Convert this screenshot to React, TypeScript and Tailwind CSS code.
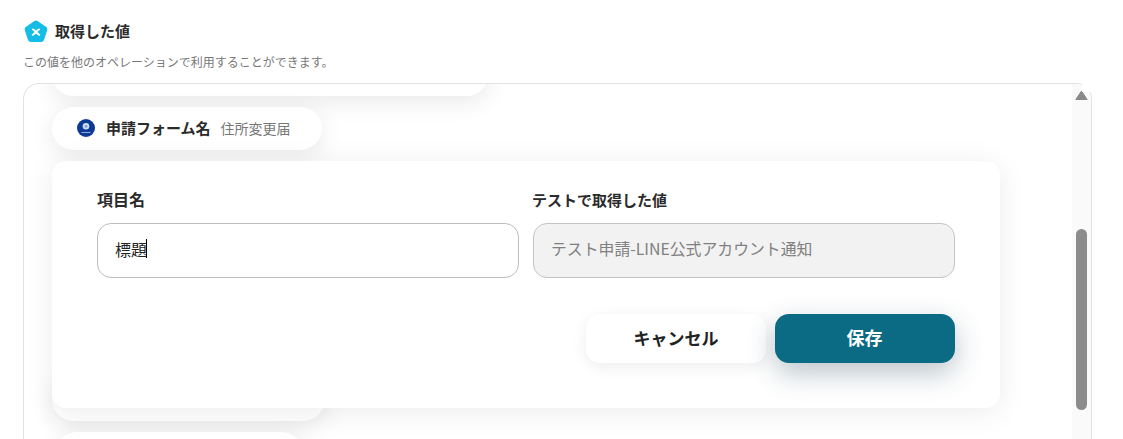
import React from 'react';

const pillShadow = 'shadow-[0_6px_24px_rgba(0,0,0,0.09)]';

const PentagonIcon = () => (
  <svg width="24" height="24" viewBox="0 0 24 24" className="shrink-0">
    <path
      d="M10 1.2a3.2 3.2 0 0 1 3.9 0l8 5.6a3.2 3.2 0 0 1 1.2 3.6l-3 9.4a3.2 3.2 0 0 1-3 2.2H6.9a3.2 3.2 0 0 1-3-2.2l-3-9.4a3.2 3.2 0 0 1 1.2-3.6z"
      fill="#13bde6"
    />
    <path
      d="M8.8 9.4c2 .4 4.4 4.8 6.6 5.4M15.2 9.4c-2 .4-4.4 4.8-6.6 5.4"
      fill="none"
      stroke="#fff"
      strokeWidth="1.9"
      strokeLinecap="round"
    />
  </svg>
);

const FormIcon = () => (
  <svg width="18" height="18" viewBox="0 0 18 18" className="shrink-0">
    <circle cx="9" cy="9" r="9" fill="#0d3a94" />
    <circle cx="9" cy="7.2" r="3.3" fill="#cfe0f2" />
    <circle cx="9" cy="7.2" r="1.5" fill="#7fa6d8" />
    <rect x="4.5" y="13" width="9" height="1" fill="#8fa9d8" />
  </svg>
);

const App: React.FC = () => {
  return (
    <div className="h-[439px] w-[1123px] overflow-hidden bg-white font-['Noto_Sans_CJK_JP','Noto_Sans',sans-serif] text-[#2b2b2b]">
      <div className="pl-[23px] pt-[20px]">
        {/* Heading */}
        <div className="flex h-[24px] items-center gap-[7px] pl-[1px]">
          <PentagonIcon />
          <h2 className="-mt-[2px] text-[15px] font-bold leading-[24px]">取得した値</h2>
        </div>
        <p className="mt-[8px] text-[12px] leading-[20px] text-[#777]">
          この値を他のオペレーションで利用することができます。
        </p>

        {/* Output list */}
        <div className="relative mt-[11px] w-[1069px]">
          <div className="flex h-[400px] overflow-hidden rounded-t-[16px] border-l border-r border-t border-[#e2e2e2]">
            <div className="flex min-w-0 flex-1 flex-col items-start pl-[28px]">
              <div className={`-mt-[30px] h-[42px] w-[436px] shrink-0 rounded-[24px] bg-white ${pillShadow}`} />

              <div className={`mt-[11px] flex h-[43px] w-[270px] shrink-0 items-center rounded-[24px] bg-white pb-[2px] pl-[25px] ${pillShadow}`}>
                <FormIcon />
                <span className="ml-[11px] text-[15px] font-bold leading-none">申請フォーム名</span>
                <span className="ml-[10px] text-[14px] leading-none text-[#777]">住所変更届</span>
              </div>

              {/* Edit panel */}
              <div className="relative z-10 mt-[11px] h-[247px] w-[948px] shrink-0 rounded-[14px] bg-white px-[45px] pt-[27px] shadow-[0_4px_30px_rgba(0,0,0,0.08)]">
                <div className="grid grid-cols-[422px_422px] gap-x-[14px]">
                  <div>
                    <label className="block text-[16px] font-bold leading-[22px]">項目名</label>
                    <div className="mt-[13px] flex h-[55px] items-center rounded-[14px] border border-[#bdbdbd] bg-white pb-[4px] pl-[17px] text-[16px] text-[#222]">
                      標題<span className="ml-[-1px] h-[19px] w-px bg-black" />
                    </div>
                  </div>
                  <div>
                    <label className="-ml-px mt-px block text-[15px] font-bold leading-[22px]">テストで取得した値</label>
                    <div className="mt-[12px] flex h-[55px] items-center rounded-[14px] border border-[#c4c4c4] bg-[#f2f2f2] pb-[4px] pl-[17px] text-[15.85px] text-[#808080]">
                      テスト申請-LINE公式アカウント通知
                    </div>
                  </div>
                </div>
                <div className="mt-[36px] flex justify-end gap-[9px]">
                  <button className="h-[49px] w-[180px] rounded-[14px] bg-white pb-[2px] text-[17px] font-bold text-[#222] shadow-[0_4px_16px_rgba(0,0,0,0.07)]">
                    キャンセル
                  </button>
                  <button className="h-[49px] w-[180px] rounded-[14px] bg-[#0b6a84] pb-[2px] pr-[1px] text-[18px] font-bold text-white shadow-[0_10px_28px_rgba(30,60,80,0.3)]">
                    保存
                  </button>
                </div>
              </div>

              <div className={`-mt-[30px] h-[43px] w-[273px] shrink-0 rounded-[24px] bg-white ${pillShadow}`} />
              <div className={`ml-[3px] mt-[11px] h-[43px] w-[248px] shrink-0 rounded-[24px] bg-white ${pillShadow}`} />
            </div>

            {/* Scrollbar */}
            <div className="flex w-[19px] shrink-0 flex-col items-center bg-[#fafafa] pt-[6px]">
              <svg width="13" height="10" viewBox="0 0 13 10">
                <path d="M6.5 1 12.2 9.5H0.8z" fill="#8a8a8a" strokeLinejoin="round" stroke="#8a8a8a" strokeWidth="1" />
              </svg>
              <div className="mt-[129px] h-[181px] w-[11px] shrink-0 rounded-[6px] bg-[#8c8c8c]" />
            </div>
          </div>
          <div className="absolute right-0 top-0 h-[9px] w-[10px] bg-white" />
        </div>
      </div>
    </div>
  );
};

export default App;
